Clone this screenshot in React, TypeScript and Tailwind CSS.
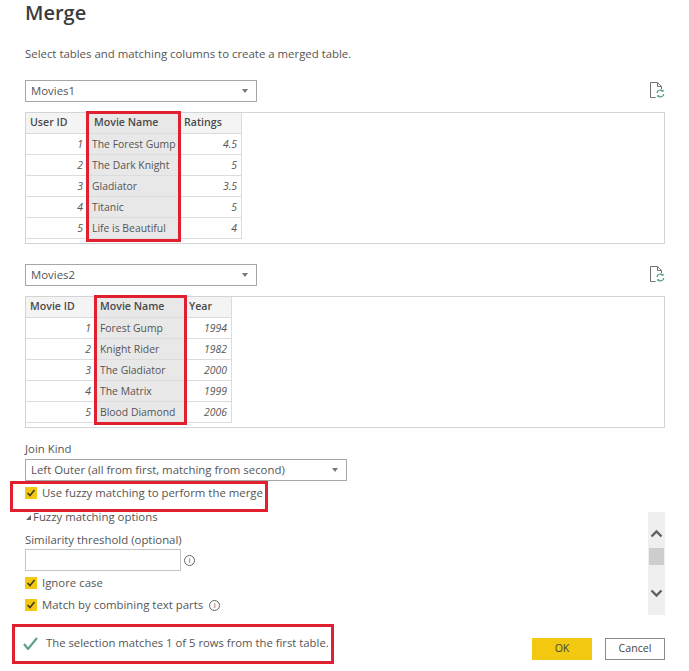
const FONT = "font-['Open_Sans','Noto_Sans',sans-serif]";

function Caret() {
  return <span className="w-0 h-0 border-l-[3.5px] border-r-[3.5px] border-t-[4px] border-l-transparent border-r-transparent border-t-[#777]" />;
}

function Select({ label, widthClass }: { label: string; widthClass: string }) {
  return (
    <div className={`${widthClass} h-[22px] border border-[#a6a6a6] flex items-center justify-between pl-[5px] pr-[8px] text-[11.4px] text-[#555]`}>
      <span>{label}</span>
      <Caret />
    </div>
  );
}

function RefreshIcon() {
  return (
    <svg width="16" height="16" viewBox="0 0 16 16" fill="none">
      <path d="M1.5 15.5V.5H8.5L12.5 4.5V7M8.5.5V4.5H12.5M1.5 15.5H6.5" stroke="#707070" strokeWidth="1" />
      <path d="M8 11a3.2 3.2 0 0 1 5.6-1.8M14.8 12a3.2 3.2 0 0 1-5.6 1.8" stroke="#4f9a82" strokeWidth="1.3" />
      <path d="M14.6 7.4v2.4h-2.4zM8.2 15.6v-2.4h2.4z" fill="#4f9a82" />
    </svg>
  );
}

type Col = { head: string; width: string; align: "num" | "text" };

function DataTable({ cols, rows, hiIndent, headIndent, bottomWidth }: { cols: Col[]; rows: string[][]; hiIndent: string; headIndent: string; bottomWidth: string }) {
  return (
    <div className="border border-[#d4d4d4] h-[132px] w-[640px]">
      <div className="flex w-fit bg-[#f4f4f4] h-[20px]">
        {cols.map((c, i) => (
          <div key={c.head} className={`${c.width} h-full flex items-center text-[10.6px] font-semibold text-[#4a4a4a] ${c.align === "text" ? `bg-[#e8e8e8] ${headIndent}` : "pl-[4px]"} ${i === cols.length - 1 ? "border-r border-[#dcdcdc]" : ""}`}>
            {c.head}
          </div>
        ))}
      </div>
      {rows.map((r) => (
        <div key={r[0]} className="flex w-fit h-[21px]">
          {r.map((v, i) => (
            <div
              key={i}
              className={`${cols[i].width} h-full border-t border-[#dcdcdc] pt-[1px] flex items-center whitespace-nowrap text-[10.4px] text-[#555] ${
                cols[i].align === "text"
                  ? `bg-[#e8e8e8] ${hiIndent}`
                  : `justify-end pr-[4px] italic ${i === cols.length - 1 ? "border-r" : ""}`
              }`}
            >
              {v}
            </div>
          ))}
        </div>
      ))}
      <div className={`h-px ${bottomWidth} bg-[#dcdcdc]`} />
    </div>
  );
}

function Check() {
  return (
    <span className="w-[12px] h-[12px] bg-[#f2c811] flex items-center justify-center shrink-0">
      <svg width="10" height="10" viewBox="0 0 10 10" fill="none">
        <path d="M1.5 5l2.5 2.5L8.5 2" stroke="#3f3a20" strokeWidth="1.6" />
      </svg>
    </span>
  );
}

function Info() {
  return (
    <span className="w-[11px] h-[11px] rounded-full border border-[#666] flex items-center justify-center text-[8px] leading-none text-[#555]">
      i
    </span>
  );
}

const table1: Col[] = [
  { head: "User ID", width: "w-[61px]", align: "num" },
  { head: "Movie Name", width: "w-[93px]", align: "text" },
  { head: "Ratings", width: "w-[62px]", align: "num" },
];
const table2: Col[] = [
  { head: "Movie ID", width: "w-[69px]", align: "num" },
  { head: "Movie Name", width: "w-[90px]", align: "text" },
  { head: "Year", width: "w-[47px]", align: "num" },
];

export default function App() {
  return (
    <div className={`${FONT} relative w-[689px] h-[671px] bg-white overflow-hidden pl-[25px] text-[#444]`}>
      <h1 className="text-[20px] leading-[26px] font-semibold text-[#3c3c3c]">Merge</h1>
      <p className="mt-[20px] text-[11.4px] leading-[16px] text-[#555]">Select tables and matching columns to create a merged table.</p>

      <div className="mt-[18px] flex items-center justify-between w-[640px] h-[22px]">
        <Select label="Movies1" widthClass="w-[232px]" />
        <span className="mt-[-2px]"><RefreshIcon /></span>
      </div>
      <div className="mt-[10px]">
        <DataTable
          cols={table1}
          hiIndent="pl-[5px]"
          headIndent="pl-[7px]"
          bottomWidth="w-[216px]"
          rows={[
            ["1", "The Forest Gump", "4.5"],
            ["2", "The Dark Knight", "5"],
            ["3", "Gladiator", "3.5"],
            ["4", "Titanic", "5"],
            ["5", "Life is Beautiful", "4"],
          ]}
        />
      </div>

      <div className="mt-[20px] flex items-center justify-between w-[640px] h-[22px]">
        <Select label="Movies2" widthClass="w-[232px]" />
        <span className="mt-[-2px]"><RefreshIcon /></span>
      </div>
      <div className="mt-[10px]">
        <DataTable
          cols={table2}
          hiIndent="pl-[5px]"
          headIndent="pl-[5px]"
          bottomWidth="w-[206px]"
          rows={[
            ["1", "Forest Gump", "1994"],
            ["2", "Knight Rider", "1982"],
            ["3", "The Gladiator", "2000"],
            ["4", "The Matrix", "1999"],
            ["5", "Blood Diamond", "2006"],
          ]}
        />
      </div>

      <div className="mt-[13px] text-[11.4px] leading-[16px] text-[#555]">Join Kind</div>
      <div className="mt-[2px]">
        <Select label="Left Outer (all from first, matching from second)" widthClass="w-[322px]" />
      </div>

      <div className="mt-[5px] flex items-center gap-[5px] h-[14px] text-[11.4px] text-[#555]">
        <Check />
        <span>Use fuzzy matching to perform the merge</span>
      </div>

      <div className="mt-[9px] flex items-center gap-[2px] text-[11.4px] leading-[16px] text-[#555]">
        <span className="w-0 h-0 border-l-[5px] border-b-[5px] border-l-transparent border-b-[#666] ml-[1px]" />
        <span>Fuzzy matching options</span>
      </div>

      <div className="mt-[7px] text-[11.4px] leading-[16px] text-[#555]">Similarity threshold (optional)</div>
      <div className="mt-[1px] flex items-center gap-[3px]">
        <div className="w-[156px] h-[22px] border border-[#c4c4c4]" />
        <Info />
      </div>

      <div className="mt-[5px] flex items-center gap-[5px] h-[14px] text-[11.4px] text-[#555]">
        <Check />
        <span>Ignore case</span>
      </div>
      <div className="mt-[8px] flex items-center gap-[5px] h-[14px] text-[11.4px] text-[#555]">
        <Check />
        <span>Match by combining text parts</span>
        <span className="ml-[1px]"><Info /></span>
      </div>

      <div className="mt-[26px] w-[640px] flex items-center justify-between h-[22px]">
        <div className="flex items-center gap-[8px] text-[11.3px] text-[#555] ml-[-2px] mb-[12px]">
          <svg width="15" height="13" viewBox="0 0 15 13" fill="none">
            <path d="M1 7l4 5L14 1" stroke="#5fa08e" strokeWidth="2.2" />
          </svg>
          <span>The selection matches 1 of 5 rows from the first table.</span>
        </div>
        <div className="flex gap-[13px] text-[10.6px]">
          <button className="w-[60px] h-[22px] bg-[#f2c811] text-[#444]">OK</button>
          <button className="w-[60px] h-[22px] border border-[#8a8a8a] text-[#444]">Cancel</button>
        </div>
      </div>

      <div className="absolute left-[86px] top-[111px] w-[95px] h-[131px] border-[3px] border-[#e0202e]" />
      <div className="absolute left-[94px] top-[295px] w-[93px] h-[130px] border-[3px] border-[#e0202e]" />
      <div className="absolute left-[10px] top-[481px] w-[258px] h-[31px] border-[3px] border-[#e0202e]" />
      <div className="absolute left-[12px] top-[624px] w-[322px] h-[40px] border-[3px] border-[#e0202e]" />

      <div className="absolute left-[648px] top-[512px] w-[17px] h-[103px] bg-[#efefef] flex flex-col items-center">
        <svg className="mt-[17px]" width="13" height="9" viewBox="0 0 13 9" fill="none">
          <path d="M1.5 7.5l5-5 5 5" stroke="#5f5f5f" strokeWidth="2.4" />
        </svg>
        <div className="mt-[10px] w-[15px] h-[17px] bg-[#cdcdcd]" />
        <svg className="mt-[24px]" width="13" height="9" viewBox="0 0 13 9" fill="none">
          <path d="M1.5 1.5l5 5 5-5" stroke="#5f5f5f" strokeWidth="2.4" />
        </svg>
      </div>
    </div>
  );
}
